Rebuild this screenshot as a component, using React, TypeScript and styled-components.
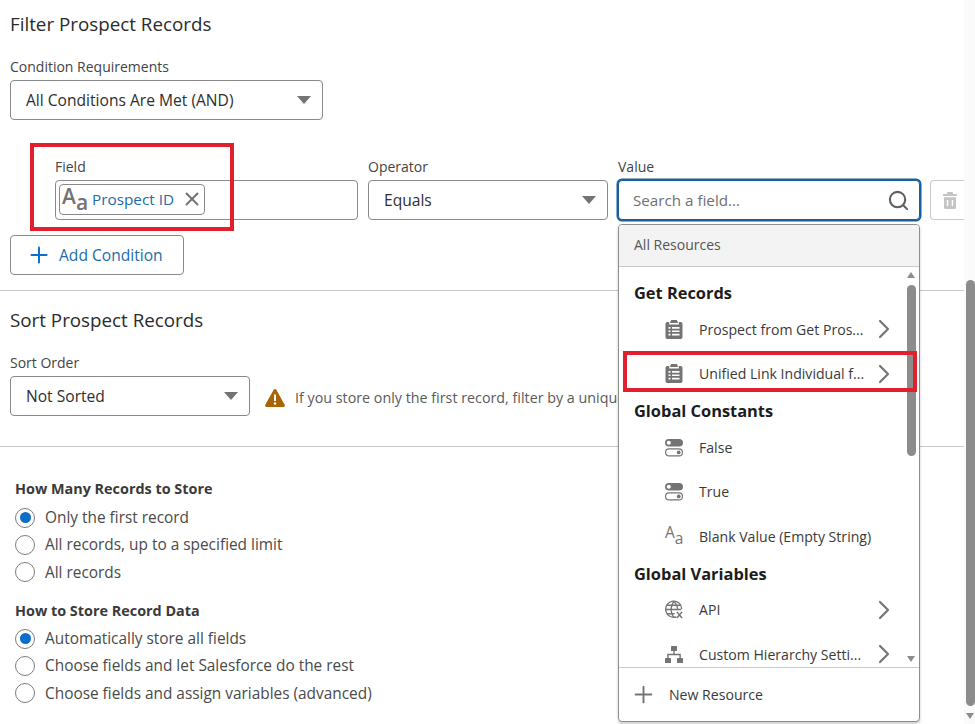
import React from "react";
import styled, { createGlobalStyle } from "styled-components";
import { Search, ChevronRight, Plus, X } from "lucide-react";

const Global = createGlobalStyle`
  html, body { margin: 0; padding: 0; background: #fff; }
  body { font-family: "Open Sans", "Noto Sans", sans-serif; color: #444; }
  * { box-sizing: border-box; }
`;

const Page = styled.div`
  position: relative;
  width: 975px;
  height: 724px;
  overflow: hidden;
  background: #fff;
  display: flex;
`;
const Main = styled.main`
  width: 964px;
  flex: none;
  display: flex;
  flex-direction: column;
`;
const Section = styled.section<{ $h: number }>`
  height: ${(p) => p.$h}px;
  flex: none;
  padding: 0 10px;
  border-bottom: 1px solid #c9c9c9;
  display: flex;
  flex-direction: column;
  align-items: flex-start;
`;
const Heading = styled.h2<{ $top: number }>`
  margin: ${(p) => p.$top}px 0 0;
  font-size: 18.8px;
  line-height: 26px;
  font-weight: 400;
  color: #2b2b2b;
`;
const Label = styled.label`
  display: block;
  font-size: 14px;
  line-height: 18px;
  color: #444;
  margin-bottom: 4px;
`;
const SelectBox = styled.div<{ $w: number }>`
  width: ${(p) => p.$w}px;
  height: 40px;
  border: 1px solid #8a8a8a;
  border-radius: 4px;
  background: #fff;
  padding: 0 11px 0 15px;
  display: flex;
  align-items: center;
  justify-content: space-between;
  font-size: 15.6px;
  color: #2e2e2e;
`;
const Caret = styled.span`
  width: 0;
  height: 0;
  border-left: 7px solid transparent;
  border-right: 7px solid transparent;
  border-top: 8px solid #747474;
`;
const Block = styled.div<{ $top: number }>`
  margin-top: ${(p) => p.$top}px;
`;
const ConditionRow = styled.div`
  margin-top: 38px;
  margin-left: 45px;
  display: flex;
  gap: 10px;
  align-items: flex-end;
`;
const FieldBox = styled.div`
  width: 303px;
  height: 40px;
  border: 1px solid #8a8a8a;
  border-radius: 4px;
  padding: 0 3px 2px;
  display: flex;
  align-items: center;
`;
const Pill = styled.div`
  width: 146px;
  height: 31px;
  border: 1px solid #8a8a8a;
  border-radius: 4px;
  display: flex;
  align-items: center;
  padding-left: 2px;
  font-size: 15.3px;
  color: #1b6ca8;
`;
const PillText = styled.span`
  margin-left: 5px;
  white-space: nowrap;
  flex: 1;
`;
const TextGlyph = styled.span<{ $big?: boolean }>`
  display: inline-flex;
  align-items: flex-end;
  width: ${(p) => (p.$big ? 25 : 18)}px;
  height: ${(p) => (p.$big ? 25 : 19)}px;
  flex: none;
  color: #747474;
  font-weight: ${(p) => (p.$big ? 600 : 500)};
  line-height: 1;
  font-size: ${(p) => (p.$big ? 21 : 15.5)}px;
`;
const GlyphUp = styled.span`
  transform: translateY(-5px);
`;
const GlyphDown = styled.span`
  transform: translateY(1px);
`;
const ValueBox = styled.div`
  width: 302px;
  height: 40px;
  border: 1.5px solid #1b5e9c;
  box-shadow: 0 0 0 1.5px #1b5e9c;
  border-radius: 4px;
  padding: 0 9px 0 14px;
  display: flex;
  align-items: center;
  justify-content: space-between;
  font-size: 15.2px;
  color: #6f6f6f;
  background: #fff;
`;
const IconButton = styled.div`
  width: 34px;
  height: 40px;
  flex: none;
  border: 1px solid #c9c9c9;
  border-right: none;
  border-radius: 4px 0 0 4px;
  display: flex;
  align-items: center;
  padding-left: 12px;
`;
const AddButton = styled.div`
  margin-top: 15px;
  width: 174px;
  height: 40px;
  border: 1px solid #8a8a8a;
  border-radius: 4px;
  display: flex;
  align-items: center;
  padding-left: 15px;
  gap: 7px;
  font-size: 15.6px;
  color: #1b6ca8;
`;
const SortRow = styled.div`
  display: flex;
  align-items: center;
  gap: 15px;
`;
const Warn = styled.div`
  display: flex;
  align-items: center;
  gap: 10px;
  font-size: 14.3px;
  color: #5a5a5a;
  white-space: nowrap;
  margin-top: 3px;
`;
const OptionsArea = styled.section`
  padding: 32px 15px 0;
`;
const GroupTitle = styled.h3<{ $top: number; $bottom: number }>`
  margin: ${(p) => p.$top}px 0 ${(p) => p.$bottom}px;
  font-size: 14.4px;
  line-height: 19px;
  font-weight: 700;
  color: #3a3a3a;
`;
const RadioRow = styled.div`
  display: flex;
  align-items: center;
  gap: 10px;
  height: 27.3px;
  font-size: 15.4px;
  color: #4a4a4a;
`;
const RadioDot = styled.span<{ $on?: boolean }>`
  width: 20px;
  height: 20px;
  flex: none;
  border-radius: 50%;
  border: 1px solid #7d7d7d;
  display: flex;
  align-items: center;
  justify-content: center;
  &::after {
    content: "";
    width: 11px;
    height: 11px;
    border-radius: 50%;
    background: ${(p) => (p.$on ? "#0a6fc9" : "transparent")};
  }
`;
const ScrollRail = styled.aside`
  flex: 1;
  background: #fafafa;
  position: relative;
`;
const RailThumb = styled.div`
  position: absolute;
  left: 2px;
  right: 0;
  top: 280px;
  height: 426px;
  background: #8c8c8c;
  border-radius: 5px;
`;
const RailArrow = styled.div`
  position: absolute;
  left: 2px;
  top: 713px;
  width: 0;
  height: 0;
  border-left: 4.5px solid transparent;
  border-right: 4.5px solid transparent;
  border-top: 6px solid #8c8c8c;
`;
const Dropdown = styled.div`
  position: absolute;
  left: 618px;
  top: 224px;
  width: 302px;
  height: 498px;
  background: #fff;
  border: 1px solid #8e8e8e;
  border-radius: 4px;
  box-shadow: 0 2px 3px rgba(0, 0, 0, 0.2);
  display: flex;
  flex-direction: column;
  overflow: hidden;
`;
const DropHead = styled.div`
  height: 42px;
  flex: none;
  background: #f3f3f3;
  border-bottom: 1px solid #c9c9c9;
  padding: 0 0 2px 15px;
  display: flex;
  align-items: center;
  font-size: 14px;
  color: #555;
`;
const DropList = styled.div`
  height: 400px;
  flex: none;
  padding-top: 11px;
  overflow: hidden;
  position: relative;
`;
const DropGroup = styled.div`
  height: 29px;
  padding-left: 15px;
  display: flex;
  align-items: center;
  font-size: 16.4px;
  font-weight: 700;
  color: #1c1c1c;
`;
const DropItem = styled.div`
  height: 44.5px;
  display: flex;
  align-items: center;
  padding-left: 46px;
  font-size: 14.1px;
  color: #3a3a3a;
  position: relative;
`;
const ItemIcon = styled.span`
  width: 18px;
  flex: none;
  display: flex;
  justify-content: center;
`;
const ItemLabel = styled.span`
  margin-left: 16px;
  white-space: nowrap;
`;
const ItemChevron = styled.span`
  position: absolute;
  left: 249px;
  top: 50%;
  margin-top: -16px;
  height: 32px;
  color: #747474;
`;
const MiniThumb = styled.div`
  position: absolute;
  left: 288px;
  top: 18px;
  width: 9px;
  height: 171px;
  border-radius: 5px;
  background: #8c8c8c;
`;
const MiniArrow = styled.div<{ $up?: boolean; $top: number }>`
  position: absolute;
  left: 288px;
  top: ${(p) => p.$top}px;
  width: 0;
  height: 0;
  border-left: 4.5px solid transparent;
  border-right: 4.5px solid transparent;
  ${(p) => (p.$up ? "border-bottom: 6px solid #8c8c8c;" : "border-top: 6px solid #8c8c8c;")}
`;
const DropFoot = styled.div`
  flex: 1;
  border-top: 1px solid #c9c9c9;
  padding-left: 11px;
  display: flex;
  align-items: center;
  gap: 12px;
  font-size: 14.1px;
  color: #3a3a3a;
`;
const Highlight = styled.div<{ $l: number; $t: number; $w: number; $h: number }>`
  position: absolute;
  left: ${(p) => p.$l}px;
  top: ${(p) => p.$t}px;
  width: ${(p) => p.$w}px;
  height: ${(p) => p.$h}px;
  border: 4px solid #e0202c;
  pointer-events: none;
`;

const Clipboard = () => (
  <svg width="18" height="19" viewBox="0 0 18 19" fill="none">
    <path fill="#747474" fillRule="evenodd" d="M6 0h6v1.2h0.8V3H5.2V1.2H6zM2.2 2h2v2.4h9.6V2h2A1.7 1.7 0 0 1 17.5 3.7v13.6A1.7 1.7 0 0 1 15.8 19H2.2A1.7 1.7 0 0 1 .5 17.3V3.7A1.7 1.7 0 0 1 2.2 2zM3.5 7v1.7h2V7zM7 7v1.7h7.5V7zM3.5 10.4v1.7h2v-1.7zM7 10.4v1.7h7.5v-1.7zM3.5 13.8v1.7h2v-1.7zM7 13.8v1.7h7.5v-1.7z" />
  </svg>
);
const Toggle = () => (
  <svg width="18" height="19" viewBox="0 0 19 19" fill="none">
    <rect x="0" y="0.5" width="19" height="8" rx="4" fill="#747474" />
    <circle cx="4" cy="4.5" r="2.2" fill="#fff" />
    <rect x="0.6" y="11" width="17.8" height="7.4" rx="3.7" stroke="#747474" strokeWidth="1.2" />
    <circle cx="14.5" cy="14.7" r="2" fill="#747474" />
  </svg>
);
const GlobeX = () => (
  <svg width="18" height="19" viewBox="0 0 19 19" fill="none" stroke="#747474" strokeWidth="1.4">
    <path d="M12 17.2A8.5 8.5 0 1 1 17.7 9" />
    <path d="M1 9.5h16M2.2 5h14.4M2.2 14h8M9.2 1C5.5 6 5.5 13 9.2 18M9.2 1c3 2.5 4 6 4 8" />
    <path d="M12.5 12l5.5 6.5M18 12l-5.5 6.5" strokeWidth="1.6" />
  </svg>
);
const Hierarchy = () => (
  <svg width="18" height="17" viewBox="0 0 18 17" fill="#747474">
    <rect x="6" y="0" width="6" height="5" rx="0.6" />
    <rect x="0" y="12" width="6" height="5" rx="0.6" />
    <rect x="12" y="12" width="6" height="5" rx="0.6" />
    <path d="M8.3 5h1.4v2.8H15.8v4.2h-1.4V9.2H3.6V12H2.2V7.8H8.3z" />
  </svg>
);
const Warning = () => (
  <svg width="20" height="18" viewBox="0 0 20 18" style={{ flex: "none" }}>
    <path fill="#a96404" d="M10 0c.6 0 1 .3 1.3.8l8.4 15c.5.9-.1 2.2-1.2 2.2H1.5C.4 18-.2 16.7.3 15.8l8.4-15C9 .3 9.4 0 10 0z" />
    <rect x="9" y="5.5" width="2" height="6.5" fill="#fff" />
    <circle cx="10" cy="14.5" r="1.3" fill="#fff" />
  </svg>
);
const TrashSolid = () => (
  <svg width="14" height="17" viewBox="0 0 14 17">
    <path fill="#c4c4c4" fillRule="evenodd" d="M5 0h4a1 1 0 0 1 1 1v1h3.3a.7.7 0 0 1 .7.7V4H0V2.7A.7.7 0 0 1 .7 2H4V1a1 1 0 0 1 1-1zM1 5.2h12v10.3A1.5 1.5 0 0 1 11.5 17h-9A1.5 1.5 0 0 1 1 15.5zM3.8 8v6h1.5V8zM8.7 8v6h1.500V8z" />
  </svg>
);
const TextIcon = ({ big }: { big?: boolean }) => (
  <TextGlyph $big={big}>
    <GlyphUp>A</GlyphUp>
    <GlyphDown>a</GlyphDown>
  </TextGlyph>
);

const Chev = () => (
  <ItemChevron>
    <ChevronRight size={32} strokeWidth={1.6} />
  </ItemChevron>
);

export default function App() {
  return (
    <Page>
      <Global />
      <Main>
        <Section $h={291}>
          <Heading $top={11}>Filter Prospect Records</Heading>
          <Block $top={21}>
            <Label>Condition Requirements</Label>
            <SelectBox $w={313}>
              All Conditions Are Met (AND)
              <Caret />
            </SelectBox>
          </Block>
          <ConditionRow>
            <div>
              <Label>Field</Label>
              <FieldBox>
                <Pill>
                  <TextIcon big />
                  <PillText>Prospect ID</PillText>
                  <X size={22} color="#747474" strokeWidth={2.1} style={{ marginRight: 1 }} />
                </Pill>
              </FieldBox>
            </div>
            <div>
              <Label>Operator</Label>
              <SelectBox $w={240}>
                Equals
                <Caret />
              </SelectBox>
            </div>
            <div>
              <Label>Value</Label>
              <ValueBox>
                Search a field...
                <Search size={23} color="#5f5f5f" strokeWidth={2.2} />
              </ValueBox>
            </div>
            <IconButton>
              <TrashSolid />
            </IconButton>
          </ConditionRow>
          <AddButton>
            <Plus size={26} color="#0a6fc9" strokeWidth={1.8} />
            Add Condition
          </AddButton>
        </Section>
        <Section $h={156}>
          <Heading $top={16}>Sort Prospect Records</Heading>
          <Block $top={21}>
            <Label>Sort Order</Label>
            <SortRow>
              <SelectBox $w={240}>
                Not Sorted
                <Caret />
              </SelectBox>
              <Warn>
                <Warning />
                If you store only the first record, filter by a unique
              </Warn>
            </SortRow>
          </Block>
        </Section>
        <OptionsArea>
          <GroupTitle $top={0} $bottom={6}>How Many Records to Store</GroupTitle>
          <RadioRow><RadioDot $on />Only the first record</RadioRow>
          <RadioRow><RadioDot />All records, up to a specified limit</RadioRow>
          <RadioRow><RadioDot />All records</RadioRow>
          <GroupTitle $top={15} $bottom={5}>How to Store Record Data</GroupTitle>
          <RadioRow><RadioDot $on />Automatically store all fields</RadioRow>
          <RadioRow><RadioDot />Choose fields and let Salesforce do the rest</RadioRow>
          <RadioRow><RadioDot />Choose fields and assign variables (advanced)</RadioRow>
        </OptionsArea>
      </Main>
      <ScrollRail>
        <RailThumb />
        <RailArrow />
      </ScrollRail>
      <Dropdown>
        <DropHead>All Resources</DropHead>
        <DropList>
          <DropGroup>Get Records</DropGroup>
          <DropItem><ItemIcon><Clipboard /></ItemIcon><ItemLabel>Prospect from Get Pros...</ItemLabel><Chev /></DropItem>
          <DropItem><ItemIcon><Clipboard /></ItemIcon><ItemLabel>Unified Link Individual f...</ItemLabel><Chev /></DropItem>
          <DropGroup>Global Constants</DropGroup>
          <DropItem><ItemIcon><Toggle /></ItemIcon><ItemLabel>False</ItemLabel></DropItem>
          <DropItem><ItemIcon><Toggle /></ItemIcon><ItemLabel>True</ItemLabel></DropItem>
          <DropItem><ItemIcon><TextIcon /></ItemIcon><ItemLabel>Blank Value (Empty String)</ItemLabel></DropItem>
          <DropGroup>Global Variables</DropGroup>
          <DropItem><ItemIcon><GlobeX /></ItemIcon><ItemLabel>API</ItemLabel><Chev /></DropItem>
          <DropItem><ItemIcon><Hierarchy /></ItemIcon><ItemLabel>Custom Hierarchy Setti...</ItemLabel><Chev /></DropItem>
          <MiniArrow $up $top={5} />
          <MiniThumb />
          <MiniArrow $top={389} />
        </DropList>
        <DropFoot>
          <Plus size={27} color="#747474" strokeWidth={1.7} />
          New Resource
        </DropFoot>
      </Dropdown>
      <Highlight $l={30} $t={143} $w={204} $h={88} />
      <Highlight $l={623} $t={351} $w={294} $h={41} />
    </Page>
  );
}
